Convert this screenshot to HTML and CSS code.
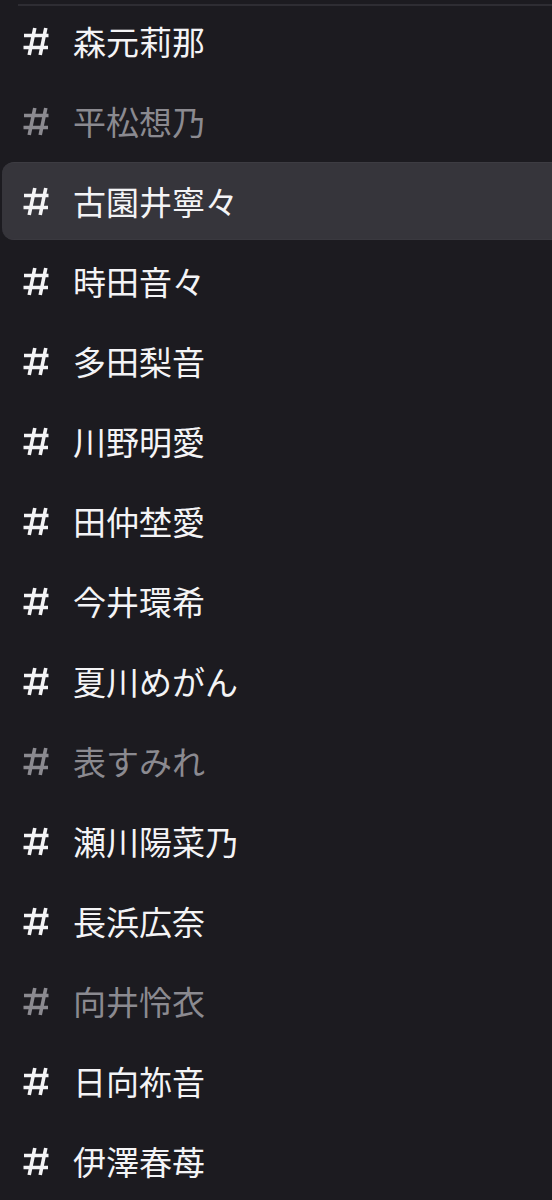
FILE: index.html
```html
<!DOCTYPE html>
<html lang="ja">
<head>
<meta charset="utf-8">
<title>Channels</title>
<link rel="stylesheet" href="styles.css">
</head>
<body>
<div class="panel">
  <div class="divider"></div>
  <ul class="channels">
    <li class="row"><svg class="hash" viewBox="0 0 26 29"><path d="M11.8 1L6.2 28M22.8 1L17.2 28M1 8.5H25.5M0.5 20.5H25"/></svg><span class="name">森元莉那</span></li>
    <li class="row muted"><svg class="hash" viewBox="0 0 26 29"><path d="M11.8 1L6.2 28M22.8 1L17.2 28M1 8.5H25.5M0.5 20.5H25"/></svg><span class="name">平松想乃</span></li>
    <li class="row selected"><svg class="hash" viewBox="0 0 26 29"><path d="M11.8 1L6.2 28M22.8 1L17.2 28M1 8.5H25.5M0.5 20.5H25"/></svg><span class="name">古園井寧々</span></li>
    <li class="row"><svg class="hash" viewBox="0 0 26 29"><path d="M11.8 1L6.2 28M22.8 1L17.2 28M1 8.5H25.5M0.5 20.5H25"/></svg><span class="name">時田音々</span></li>
    <li class="row"><svg class="hash" viewBox="0 0 26 29"><path d="M11.8 1L6.2 28M22.8 1L17.2 28M1 8.5H25.5M0.5 20.5H25"/></svg><span class="name">多田梨音</span></li>
    <li class="row"><svg class="hash" viewBox="0 0 26 29"><path d="M11.8 1L6.2 28M22.8 1L17.2 28M1 8.5H25.5M0.5 20.5H25"/></svg><span class="name">川野明愛</span></li>
    <li class="row"><svg class="hash" viewBox="0 0 26 29"><path d="M11.8 1L6.2 28M22.8 1L17.2 28M1 8.5H25.5M0.5 20.5H25"/></svg><span class="name">田仲埜愛</span></li>
    <li class="row"><svg class="hash" viewBox="0 0 26 29"><path d="M11.8 1L6.2 28M22.8 1L17.2 28M1 8.5H25.5M0.5 20.5H25"/></svg><span class="name">今井環希</span></li>
    <li class="row"><svg class="hash" viewBox="0 0 26 29"><path d="M11.8 1L6.2 28M22.8 1L17.2 28M1 8.5H25.5M0.5 20.5H25"/></svg><span class="name">夏川めがん</span></li>
    <li class="row muted"><svg class="hash" viewBox="0 0 26 29"><path d="M11.8 1L6.2 28M22.8 1L17.2 28M1 8.5H25.5M0.5 20.5H25"/></svg><span class="name">表すみれ</span></li>
    <li class="row"><svg class="hash" viewBox="0 0 26 29"><path d="M11.8 1L6.2 28M22.8 1L17.2 28M1 8.5H25.5M0.5 20.5H25"/></svg><span class="name">瀬川陽菜乃</span></li>
    <li class="row"><svg class="hash" viewBox="0 0 26 29"><path d="M11.8 1L6.2 28M22.8 1L17.2 28M1 8.5H25.5M0.5 20.5H25"/></svg><span class="name">長浜広奈</span></li>
    <li class="row muted"><svg class="hash" viewBox="0 0 26 29"><path d="M11.8 1L6.2 28M22.8 1L17.2 28M1 8.5H25.5M0.5 20.5H25"/></svg><span class="name">向井怜衣</span></li>
    <li class="row"><svg class="hash" viewBox="0 0 26 29"><path d="M11.8 1L6.2 28M22.8 1L17.2 28M1 8.5H25.5M0.5 20.5H25"/></svg><span class="name">日向祢音</span></li>
    <li class="row"><svg class="hash" viewBox="0 0 26 29"><path d="M11.8 1L6.2 28M22.8 1L17.2 28M1 8.5H25.5M0.5 20.5H25"/></svg><span class="name">伊澤春苺</span></li>
  </ul>
</div>
</body>
</html>
```

FILE: styles.css
```css
html, body {
  margin: 0;
  padding: 0;
  background: #1c1b20;
  overflow: hidden;
}

.panel {
  width: 552px;
  min-height: 1200px;
  overflow: hidden;
  font-family: "Noto Sans CJK JP", "Noto Sans", sans-serif;
}

.divider {
  height: 2px;
  margin: 4px 0 -4px 18px;
  background: #2e2d33;
}

.channels {
  list-style: none;
  margin: 0;
  padding: 0;
  display: flex;
  flex-direction: column;
  gap: 2px;
}

.row {
  height: 78px;
  display: flex;
  align-items: center;
  padding-left: 23px;
  gap: 24px;
  color: #f4f4f6;
  box-sizing: border-box;
}

.row.muted {
  color: #8b8a90;
}

.row.selected {
  margin-left: 2px;
  margin-right: -20px;
  padding-left: 21px;
  background: #36353b;
  border-top: 1px solid #3d3c42;
  border-bottom: 1px solid #3a393f;
  border-radius: 12px 0 0 12px;
}

.hash {
  width: 26px;
  height: 29px;
  flex: none;
  fill: none;
  stroke: currentColor;
  stroke-width: 3.6;
}

.name {
  font-size: 33px;
  font-weight: 400;
  line-height: 1;
  letter-spacing: 0;
  padding-top: 1px;
}
```
